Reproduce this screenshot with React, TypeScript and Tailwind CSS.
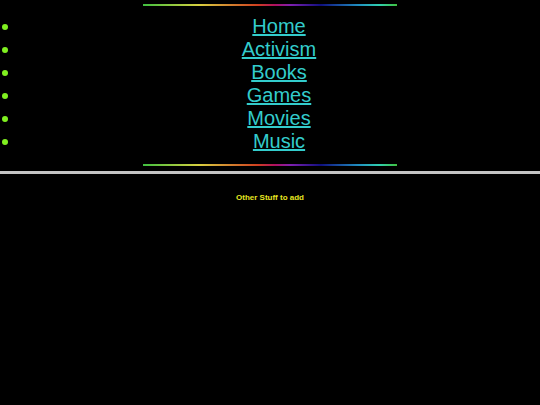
const links = ["Home", "Activism", "Books", "Games", "Movies", "Music"];

function Rainbow({ className = "" }: { className?: string }) {
  return (
    <div
      className={`mx-auto h-[2px] w-[254px] bg-[linear-gradient(to_right,#40c040,#d8d040_22%,#d04020_45%,#b01060_52%,#8020b0_58%,#101080_70%,#2090c0_85%,#30d0b0_93%,#40c040)] ${className}`}
    />
  );
}

export default function App() {
  return (
    <div className="min-h-[405px] bg-black font-['Liberation_Sans',Arial,sans-serif] pt-[4px]">
      <Rainbow />
      <ul className="mt-[9px]">
        {links.map((name) => (
          <li key={name} className="grid grid-cols-[18px_1fr] items-center h-[23px]">
            <span className="ml-[2px] w-[6px] h-[6px] rounded-full bg-[#80f020]" />
            <a href="#" className="text-center text-[20px] leading-[23px] text-[#33cccc] underline">
              {name}
            </a>
          </li>
        ))}
      </ul>
      <Rainbow className="mt-[11px]" />
      <div className="mt-[5px] h-[3px] bg-[#c4c4c4]" />
      <p className="mt-[19px] text-center text-[8px] font-bold leading-[10px] text-[#e6e620]">
        Other Stuff to add
      </p>
    </div>
  );
}
